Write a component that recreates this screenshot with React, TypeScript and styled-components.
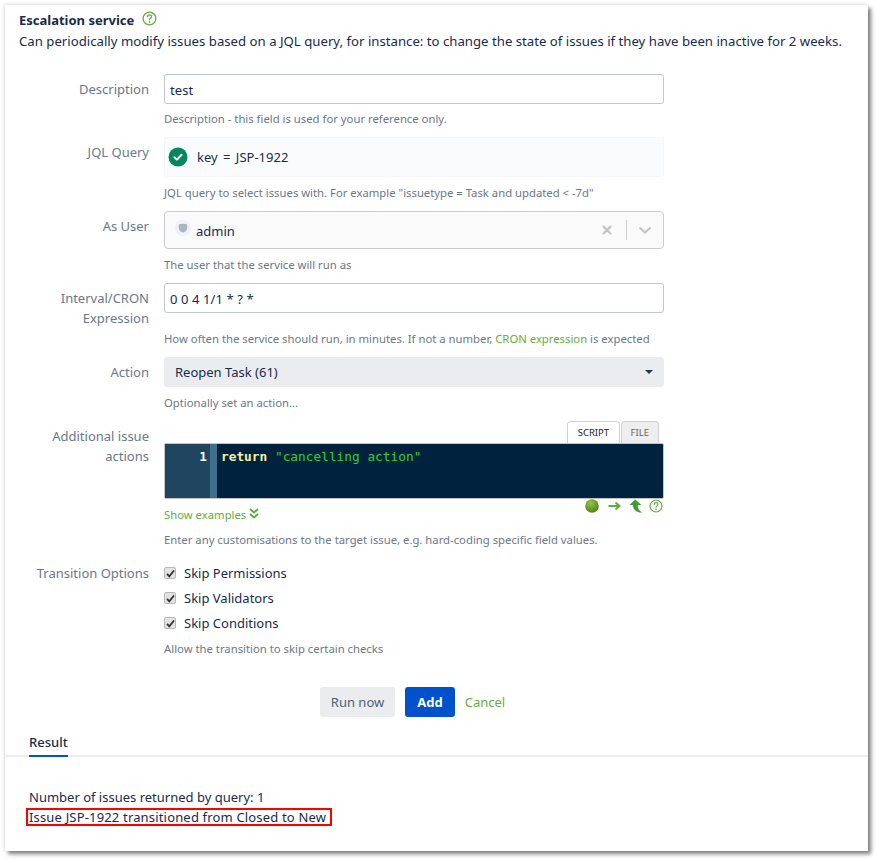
import React from "react";
import styled, { createGlobalStyle } from "styled-components";

const GlobalStyle = createGlobalStyle`
  html, body {
    margin: 0;
    padding: 0;
    height: 860px;
    overflow: hidden;
    background: #ffffff;
  }
  body {
    font-family: "Noto Sans", "Open Sans", sans-serif;
    font-size: 13px;
    color: #172b4d;
  }
`;

const HelpIcon = ({ size = 15 }: { size?: number }) => (
  <svg width={size} height={size} viewBox="0 0 16 16" fill="none">
    <circle cx="8" cy="8" r="6.8" stroke="#5fae3c" strokeWidth="1.3" />
    <path
      d="M5.9 6.2c0-1.2 1-2 2.2-2 1.2 0 2.1.8 2.1 1.9 0 1.7-2.2 1.7-2.2 3.3"
      stroke="#5fae3c"
      strokeWidth="1.3"
      strokeLinecap="round"
    />
    <circle cx="8" cy="11.6" r="0.9" fill="#5fae3c" />
  </svg>
);

const App = () => {
  return (
    <>
      <GlobalStyle />
      <Card>
        <TitleRow>
          <Title>Escalation service</Title>
          <HelpIcon />
        </TitleRow>
        <Intro>
          Can periodically modify issues based on a JQL query, for instance: to
          change the state of issues if they have been inactive for 2 weeks.
        </Intro>

        <Form>
          <Row>
            <Label>Description</Label>
            <Field>
              <TextInput>test</TextInput>
              <Help>Description - this field is used for your reference only.</Help>
            </Field>
          </Row>

          <Row>
            <Label>JQL Query</Label>
            <Field>
              <JqlBox>
                <svg width="20" height="20" viewBox="0 0 20 20">
                  <circle cx="10" cy="10" r="9.5" fill="#00875a" />
                  <path
                    d="M6.4 10.2l2.5 2.4 4.7-4.8"
                    fill="none"
                    stroke="#ffffff"
                    strokeWidth="2"
                    strokeLinecap="round"
                    strokeLinejoin="round"
                  />
                </svg>
                <JqlText>key = JSP-1922</JqlText>
              </JqlBox>
              <Help $top={6}>
                JQL query to select issues with. For example "issuetype = Task and
                updated &lt; -7d"
              </Help>
            </Field>
          </Row>

          <Row>
            <Label>As User</Label>
            <Field>
              <UserSelect>
                <Avatar>
                  <svg width="16" height="16" viewBox="0 0 16 16">
                    <circle cx="8" cy="8" r="8" fill="#eef1f6" />
                    <path
                      d="M3.8 4.6c2.6-1 5.800-1 8.400 0v3.200c0 2.600-2 4.400-4.200 4.800-2.200-.4-4.200-2.200-4.200-4.800z"
                      fill="#a9b4c4"
                    />
                  </svg>
                </Avatar>
                <UserName>admin</UserName>
                <svg width="12" height="12" viewBox="0 0 12 12">
                  <path
                    d="M2 2l8 8M10 2l-8 8"
                    stroke="#c4c4c4"
                    strokeWidth="2.400"
                  />
                </svg>
                <SelectDivider />
                <svg width="14" height="10" viewBox="0 0 14 10">
                  <path
                    d="M1.500 2.500L7 7.500l5.500-5"
                    fill="none"
                    stroke="#c4c4c4"
                    strokeWidth="2.200"
                  />
                </svg>
              </UserSelect>
              <Help $top={6}>The user that the service will run as</Help>
            </Field>
          </Row>

          <Row>
            <Label>Interval/CRON Expression</Label>
            <Field>
              <TextInput>0 0 4 1/1 * ? *</TextInput>
              <Help $top={16}>
                How often the service should run, in minutes. If not a number,{" "}
                <GreenLink>CRON expression</GreenLink> is expected
              </Help>
            </Field>
          </Row>

          <Row>
            <Label>Action</Label>
            <Field>
              <ActionSelect>
                <span>Reopen Task (61)</span>
                <Caret />
              </ActionSelect>
              <Help $top={6}>Optionally set an action...</Help>
            </Field>
          </Row>

          <Row>
            <Label $top={5}>Additional issue actions</Label>
            <Field>
              <EditorTabs>
                <EditorTab $active>SCRIPT</EditorTab>
                <EditorTab>FILE</EditorTab>
              </EditorTabs>
              <Editor>
                <Gutter>1</Gutter>
                <FoldGutter />
                <Code>
                  <Keyword>return</Keyword> <StringToken>"cancelling action"</StringToken>
                </Code>
              </Editor>
              <EditorFooter>
                <GreenLink>
                  Show examples{" "}
                  <svg width="10" height="11" viewBox="0 0 10 11">
                    <path
                      d="M1 1l4 3.500L9 1M1 6l4 3.500L9 6"
                      fill="none"
                      stroke="#5fae3c"
                      strokeWidth="2"
                    />
                  </svg>
                </GreenLink>
                <EditorIcons>
                  <svg width="14" height="14" viewBox="0 0 14 14">
                    <defs>
                      <radialGradient id="ball" cx="0.4" cy="0.3" r="0.8">
                        <stop offset="0" stopColor="#94c544" />
                        <stop offset="1" stopColor="#3f7d10" />
                      </radialGradient>
                    </defs>
                    <circle cx="7" cy="7" r="6.800" fill="url(#ball)" />
                  </svg>
                  <svg width="13" height="10" viewBox="0 0 13 10">
                    <path
                      d="M0.500 5h10M7.500 1.500L11.500 5l-4 3.500"
                      fill="none"
                      stroke="#5fae3c"
                      strokeWidth="2"
                    />
                  </svg>
                  <svg width="14" height="14" viewBox="0 0 14 14">
                    <path
                      d="M6 0.500L0.500 6H4c0 3.500 2 6.500 6.500 7.500h3C10 12 8.800 9.500 8.800 6h3.700z"
                      fill="#3f9a3a"
                    />
                  </svg>
                  <HelpIcon size={14} />
                </EditorIcons>
              </EditorFooter>
              <Help>
                Enter any customisations to the target issue, e.g. hard-coding
                specific field values.
              </Help>
            </Field>
          </Row>

          <OptionsRow>
            <Label $top={0}>Transition Options</Label>
            <Field>
              {["Skip Permissions", "Skip Validators", "Skip Conditions"].map(
                (name) => (
                  <CheckRow key={name}>
                    <CheckBox>
                      <svg width="9" height="9" viewBox="0 0 9 9">
                        <path
                          d="M1 4.800l2.300 2.500L8 1.500"
                          fill="none"
                          stroke="#333333"
                          strokeWidth="1.800"
                        />
                      </svg>
                    </CheckBox>
                    {name}
                  </CheckRow>
                )
              )}
              <Help $top={1}>Allow the transition to skip certain checks</Help>
            </Field>
          </OptionsRow>

          <ButtonRow>
            <div />
            <Buttons>
              <Button>Run now</Button>
              <Button $primary>Add</Button>
              <CancelLink>Cancel</CancelLink>
            </Buttons>
          </ButtonRow>
        </Form>

        <TabStrip>
          <ResultTab>Result</ResultTab>
        </TabStrip>
        <ResultBody>
          <ResultLine>Number of issues returned by query: 1</ResultLine>
          <HighlightedLine>Issue JSP-1922 transitioned from Closed to New</HighlightedLine>
        </ResultBody>
      </Card>
    </>
  );
};

const Card = styled.div`
  box-sizing: border-box;
  width: 863px;
  height: 846px;
  margin: 5px 0 0 5px;
  background: #ffffff;
  box-shadow: 3px 3px 4px rgba(0, 0, 0, 0.5), -1px -1px 3px rgba(0, 0, 0, 0.12);
  padding-top: 5px;
`;

const TitleRow = styled.div`
  display: flex;
  align-items: flex-start;
  gap: 8px;
  height: 20px;
  padding-left: 14px;
  line-height: 20px;

  svg {
    margin-top: 1px;
  }
`;

const Title = styled.div`
  font-weight: 700;
  font-size: 13px;
  color: #172b4d;
`;

const Intro = styled.div`
  height: 20px;
  padding: 1px 0 0 14px;
  font-size: 13.2px;
  line-height: 20px;
  white-space: nowrap;
`;

const Form = styled.div`
  display: flex;
  flex-direction: column;
  gap: 8px;
  padding: 23px 0 0 14px;
`;

const Row = styled.div`
  display: grid;
  grid-template-columns: 130px 500px;
  column-gap: 15px;
`;

const OptionsRow = styled(Row)`
  margin-top: 5px;
`;

const Label = styled.div<{ $top?: number }>`
  padding-top: ${(p) => p.$top ?? 5}px;
  text-align: right;
  line-height: 20px;
  color: #6b778c;
`;

const Field = styled.div`
  display: flex;
  flex-direction: column;
  min-width: 0;
`;

const TextInput = styled.div`
  box-sizing: border-box;
  height: 30px;
  padding: 0 5px;
  line-height: 30px;
  letter-spacing: 0.1px;
  background: #ffffff;
  border: 1px solid #c1c7d0;
  border-radius: 3px;
`;

const Help = styled.div<{ $top?: number }>`
  margin-top: ${(p) => p.$top ?? 5}px;
  font-size: 11.3px;
  line-height: 20px;
  color: #6b778c;
  white-space: nowrap;
`;

const JqlBox = styled.div`
  box-sizing: border-box;
  display: flex;
  align-items: center;
  gap: 9px;
  height: 40px;
  padding: 0 3px;
  background: #fafbfc;
  border: 1px solid #f4f5f7;
  border-radius: 3px;
`;

const JqlText = styled.span`
  word-spacing: 2px;
`;

const UserSelect = styled.div`
  box-sizing: border-box;
  display: flex;
  align-items: center;
  height: 38px;
  padding: 0 11px 0 10px;
  background: #fafafa;
  border: 1px solid #c8ccd2;
  border-radius: 4px;
`;

const Avatar = styled.div`
  display: flex;
  margin: -4px 5px 0 0;
`;

const UserName = styled.span`
  flex: 1;
  padding-top: 2px;
`;

const SelectDivider = styled.div`
  width: 1px;
  height: 20px;
  margin: 0 11px 0 13px;
  background: #cccccc;
`;

const GreenLink = styled.span`
  color: #5fae3c;
`;

const ActionSelect = styled.div`
  box-sizing: border-box;
  display: flex;
  align-items: center;
  justify-content: space-between;
  height: 30px;
  padding: 0 11px;
  background: #ebecf0;
  border-radius: 3px;
`;

const Caret = styled.div`
  width: 0;
  height: 0;
  border-left: 4px solid transparent;
  border-right: 4px solid transparent;
  border-top: 4px solid #253858;
`;

const EditorTabs = styled.div`
  display: flex;
  justify-content: flex-end;
  gap: 1px;
  height: 22px;
  padding-right: 5px;
  align-items: flex-end;
`;

const EditorTab = styled.div<{ $active?: boolean }>`
  box-sizing: border-box;
  height: 22px;
  padding: 0 ${(p) => (p.$active ? 9.5 : 9)}px;
  font-size: 9.5px;
  line-height: 22px;
  color: ${(p) => (p.$active ? "#222222" : "#666666")};
  background: ${(p) => (p.$active ? "#ffffff" : "#eeeeee")};
  border: 1px solid #d0d0d0;
  border-bottom: 0;
  border-radius: 4px 4px 0 0;
`;

const Editor = styled.div`
  box-sizing: border-box;
  display: flex;
  height: 56px;
  background: #00223f;
  border: 1px solid #c4c4c4;
  border-radius: 2px;
`;

const Gutter = styled.div`
  width: 45px;
  box-sizing: border-box;
  padding: 4px 3px 0 0;
  text-align: right;
  font-family: "DejaVu Sans Mono", monospace;
  font-size: 12.8px;
  font-weight: 700;
  line-height: 18px;
  color: #ffffff;
  background: #1f4560;
`;

const FoldGutter = styled.div`
  width: 7px;
  background: #3f6f8a;
`;

const Code = styled.div`
  padding: 4px 0 0 4px;
  font-family: "DejaVu Sans Mono", monospace;
  font-size: 12.8px;
  line-height: 18px;
  white-space: pre;
`;

const Keyword = styled.span`
  font-weight: 700;
  color: #f1f1a0;
`;

const StringToken = styled.span`
  color: #2bd42b;
`;

const EditorFooter = styled.div`
  display: flex;
  justify-content: space-between;
  height: 26px;
  font-size: 11.3px;
  line-height: 32px;
`;

const EditorIcons = styled.div`
  display: flex;
  align-items: center;
  height: 14px;
  padding-right: 1px;

  svg:nth-child(1) {
    margin-right: 9px;
  }
  svg:nth-child(2) {
    margin-right: 8px;
  }
  svg:nth-child(3) {
    margin-right: 6px;
  }
`;

const CheckRow = styled.div`
  display: flex;
  align-items: center;
  gap: 8px;
  height: 20px;
  margin-bottom: 5px;
  line-height: 20px;
`;

const CheckBox = styled.span`
  box-sizing: border-box;
  display: flex;
  align-items: center;
  justify-content: center;
  width: 12px;
  height: 12px;
  background: #e2e2e2;
  border: 1px solid #b8b8b8;
  border-radius: 2px;
`;

const ButtonRow = styled(Row)`
  margin-top: 20px;
`;

const Buttons = styled.div`
  display: flex;
  justify-content: center;
  align-items: center;
  gap: 10px;
  padding-right: 3px;
`;

const Button = styled.div<{ $primary?: boolean }>`
  height: 30px;
  padding: 0 ${(p) => (p.$primary ? 12 : 11)}px;
  line-height: 30px;
  font-weight: ${(p) => (p.$primary ? 700 : 400)};
  color: ${(p) => (p.$primary ? "#ffffff" : "#505f79")};
  background: ${(p) => (p.$primary ? "#0052cc" : "#ebecf0")};
  border-radius: 3px;
`;

const CancelLink = styled.span`
  color: #5fae3c;
`;

const TabStrip = styled.div`
  margin-top: 15px;
  padding-left: 24px;
  border-bottom: 2px solid #ebecf0;
`;

const ResultTab = styled.div`
  display: inline-block;
  height: 23px;
  margin-bottom: -2px;
  font-weight: 500;
  line-height: 20px;
  border-bottom: 2px solid #0052cc;
  vertical-align: top;
`;

const ResultBody = styled.div`
  padding: 30px 0 0 24px;
`;

const ResultLine = styled.div`
  line-height: 20px;
  white-space: nowrap;
`;

const HighlightedLine = styled(ResultLine)`
  width: max-content;
  outline: 2px solid #ff0000;
  outline-offset: -3px;
  margin-left: -4px;
  padding: 0 7px 0 4px;
  letter-spacing: 0.17px;
`;

export default App;
